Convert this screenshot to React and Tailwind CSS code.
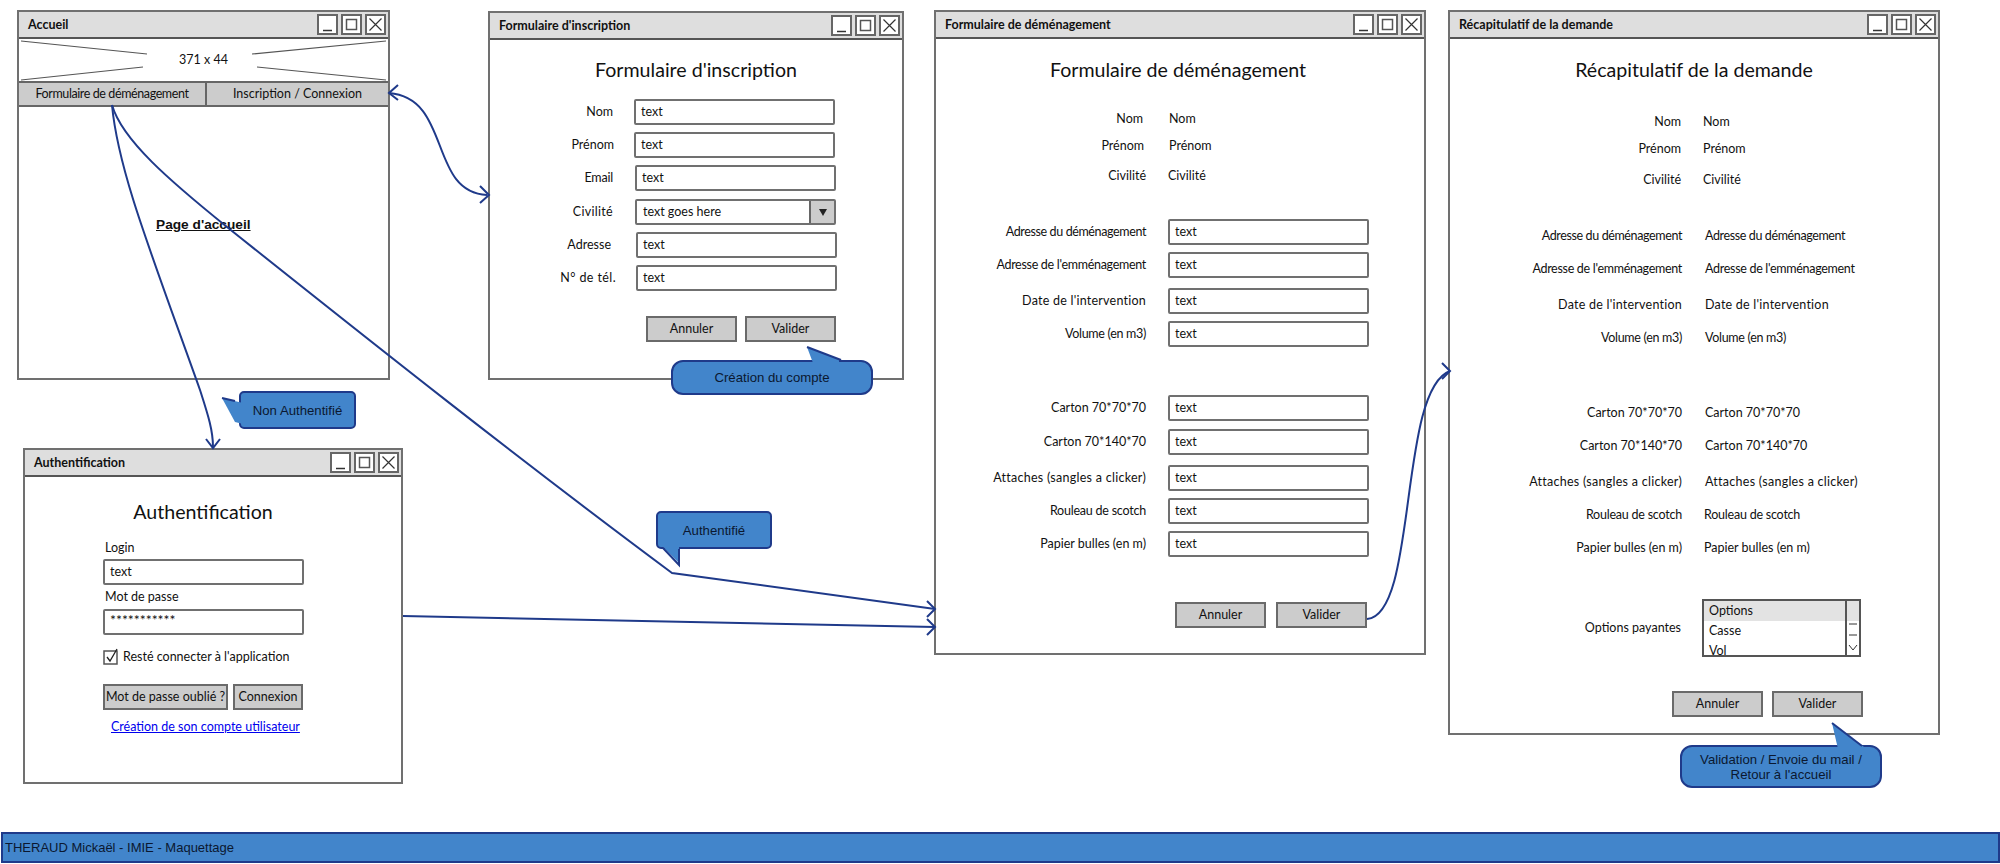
const sketch = { fontFamily: '"Lato", "Open Sans", sans-serif' };

function WinIcon({ type }) {
  return (
    <div className="w-[21px] h-[21px] bg-white border-2 border-[#666] flex items-center justify-center">
      <svg width="17" height="17" viewBox="0 0 17 17" fill="none" stroke="#333" strokeWidth="1.2">
        {type === 'min' && <path d="M4 14.5h9" strokeWidth="1.5" />}
        {type === 'max' && <rect x="3.5" y="3.5" width="10" height="10" strokeWidth="1.5" stroke="#555" />}
        {type === 'close' && <path d="M2.5 2.5l12 12M14.5 2.5l-12 12" />}
      </svg>
    </div>
  );
}

function Window({ title, className, children }) {
  return (
    <div className={`absolute bg-white border-2 border-[#707070] flex flex-col ${className}`}>
      <div className="flex items-center justify-between h-[27px] shrink-0 bg-[#dedede] border-b-2 border-[#555] pl-[9px] pr-[2px]">
        <span className="pt-[1px] text-[12.5px] font-bold text-[#111]">{title}</span>
        <div className="flex gap-[3px]">
          <WinIcon type="min" />
          <WinIcon type="max" />
          <WinIcon type="close" />
        </div>
      </div>
      {children}
    </div>
  );
}

function Heading({ children, className = '' }) {
  return <div className={`h-[28px] flex items-center justify-center text-[19.6px] leading-none text-[#111] ${className}`}>{children}</div>;
}

function Field({ children = 'text', className = 'w-[201px]' }) {
  return (
    <div className={`h-[26px] shrink-0 bg-white border-2 border-[#707070] rounded-[2px] flex items-center pl-[5px] text-[12.5px] text-[#111] ${className}`}>
      {children}
    </div>
  );
}

function Btn({ children, className = 'w-[91px]' }) {
  return (
    <div className={`h-[26px] shrink-0 bg-[#cccccc] border-2 border-[#6a6a6a] flex items-center justify-center text-[12.5px] text-[#111] ${className}`}>
      {children}
    </div>
  );
}

function FormRow({ label, lw, fs = '', className = '', children }) {
  return (
    <div className={`flex items-center ${className}`}>
      <div className={`text-right text-[12.5px] text-[#111] whitespace-nowrap shrink-0 ${fs} ${lw}`}>{label}</div>
      {children}
    </div>
  );
}

function Bubble({ className, tail, tailClass, children }) {
  return (
    <div className={`absolute z-20 bg-[#4285cb] border-2 border-[#1f3a8a] flex items-center justify-center text-center text-[13.2px] leading-[15px] text-[#0b1830] ${className}`} style={{ fontFamily: '"Liberation Sans", sans-serif' }}>
      <svg className={`absolute overflow-visible ${tailClass}`} width="40" height="30">
        <polygon points={tail.fill} fill="#4285cb" />
        <polyline points={tail.line} fill="none" stroke="#1f3a8a" strokeWidth="2" />
      </svg>
      <span className="relative">{children}</span>
    </div>
  );
}

function Arrows() {
  return (
    <svg className="absolute left-0 top-0 z-10 pointer-events-none" width="2000" height="864" fill="none" stroke="#1f3a8a" strokeWidth="2">
      <path d="M389 93C452 98 428 192 487 195" />
      <path d="M398 85L389 93L398 100M480 186L489 195L480 203" />
      <path d="M112 105C118 170 150 250 200 390C208 415 213 430 213 447" />
      <path d="M206 439L213 448L220 439" />
      <path d="M112 105C122 140 170 181 227 227C375 345 520 460 672 573L935 609" />
      <path d="M927 601L935 609L927 617" />
      <path d="M403 616L935 627" />
      <path d="M927 619L935 627L927 635" />
      <path d="M1367 619C1418 615 1398 390 1450 371" />
      <path d="M1442 363L1450 371L1442 379" />
    </svg>
  );
}

function Accueil() {
  return (
    <Window title="Accueil" className="left-[17px] top-[10px] w-[373px] h-[370px]">
      <div className="relative h-[42px] shrink-0 flex items-center justify-center text-[12.5px] text-[#111]">
        <svg className="absolute left-0 top-0" width="369" height="42" fill="none" stroke="#555" strokeWidth="1.2">
          <path d="M2 2L128 15M367 2L233 15M2 41L124 28M367 41L238 28" />
        </svg>
        371 x 44
      </div>
      <div className="flex h-[26px] shrink-0 bg-[#cccccc] border-y-2 border-[#666] text-[12.5px] text-[#111]">
        <div className="w-[188px] flex items-center justify-center border-r-2 border-[#666] tracking-[-0.4px]">Formulaire de déménagement</div>
        <div className="flex-1 flex items-center justify-center">Inscription / Connexion</div>
      </div>
      <div className="mt-[108px] ml-[137px] text-[13.7px] font-bold underline text-[#111]" style={{ fontFamily: '"Liberation Sans", sans-serif' }}>
        Page d&apos;accueil
      </div>
    </Window>
  );
}

function Inscription() {
  return (
    <Window title="Formulaire d'inscription" className="left-[488px] top-[11px] w-[416px] h-[369px]">
      <Heading className="mt-[16px]">Formulaire d&apos;inscription</Heading>
      <div className="flex flex-col gap-[7px] mt-[15px]">
        <FormRow label="Nom" lw="w-[123px]"><Field className="w-[201px] ml-[21px]" /></FormRow>
        <FormRow label="Prénom" lw="w-[124px]"><Field className="w-[201px] ml-[20px]" /></FormRow>
        <FormRow label="Email" lw="w-[123px]" fs="tracking-[-0.2px]"><Field className="w-[201px] ml-[22px]" /></FormRow>
        <FormRow label="Civilité" lw="w-[123px]" fs="tracking-[0.3px]" className="mt-[1px]">
          <div className="ml-[22px] w-[201px] h-[26px] flex border-2 border-[#707070] rounded-[2px] text-[12.5px] text-[#111]">
            <div className="flex-1 flex items-center pl-[6px]">text goes here</div>
            <div className="w-[25px] bg-[#cccccc] border-l-2 border-[#666] flex items-center justify-center">
              <svg width="10" height="9" viewBox="0 0 10 9"><path d="M1 1h8L5 8z" fill="#222" /></svg>
            </div>
          </div>
        </FormRow>
        <FormRow label="Adresse" lw="w-[121px]"><Field className="w-[201px] ml-[25px]" /></FormRow>
        <FormRow label="N° de tél." lw="w-[126px]" fs="tracking-[0.4px]"><Field className="w-[201px] ml-[20px]" /></FormRow>
      </div>
      <div className="flex gap-[8px] ml-[156px] mt-[25px]">
        <Btn>Annuler</Btn>
        <Btn>Valider</Btn>
      </div>
    </Window>
  );
}

function Auth() {
  return (
    <Window title="Authentification" className="left-[23px] top-[448px] w-[380px] h-[336px]">
      <div className="ml-[78px] w-[200px] flex flex-col text-[12.5px] text-[#111]">
        <Heading className="mt-[21px]">Authentification</Heading>
        <div className="mt-[14px] ml-[2px] h-[16px] leading-[16px]">Login</div>
        <Field className="w-[201px] mt-[3px]" />
        <div className="mt-[4px] ml-[2px] h-[16px] leading-[16px]">Mot de passe</div>
        <Field className="w-[201px] mt-[4px] items-start leading-[18px] text-[14px]">***********</Field>
        <div className="flex items-center mt-[14px] h-[16px]">
          <svg width="16" height="18" viewBox="0 0 16 18" fill="none" className="shrink-0">
            <rect x="1" y="3" width="13" height="13" stroke="#555" strokeWidth="1.5" />
            <path d="M4 9l3 4L14 1" stroke="#222" strokeWidth="1.3" />
          </svg>
          <span className="ml-[4px] whitespace-nowrap">Resté connecter à l&apos;application</span>
        </div>
        <div className="flex gap-[5px] mt-[19px]">
          <Btn className="w-[125px]">Mot de passe oublié ?</Btn>
          <Btn className="w-[70px]">Connexion</Btn>
        </div>
        <a className="mt-[9px] ml-[8px] underline text-[#0000ee] whitespace-nowrap leading-[16px]">Création de son compte utilisateur</a>
      </div>
    </Window>
  );
}

const demenagementRows = [
  { label: 'Adresse du déménagement', mt: 'mt-[33px]', fs: 'tracking-[-0.38px]' },
  { label: "Adresse de l'emménagement", mt: 'mt-[7px]', fs: 'tracking-[-0.3px]' },
  { label: "Date de l'intervention", mt: 'mt-[10px]', fs: 'tracking-[0.23px]' },
  { label: 'Volume (en m3)', mt: 'mt-[7px]', fs: 'tracking-[-0.3px]' },
  { label: 'Carton 70*70*70', mt: 'mt-[48px]' },
  { label: 'Carton 70*140*70', mt: 'mt-[8px]' },
  { label: 'Attaches (sangles a clicker)', mt: 'mt-[10px]', fs: 'tracking-[0.27px]' },
  { label: 'Rouleau de scotch', mt: 'mt-[7px]', fs: 'tracking-[-0.22px]' },
  { label: 'Papier bulles (en m)', mt: 'mt-[7px]' },
];

function Demenagement() {
  return (
    <Window title="Formulaire de déménagement" className="left-[934px] top-[10px] w-[492px] h-[645px]">
      <Heading className="mt-[17px] mr-[4px]">Formulaire de déménagement</Heading>
      <FormRow label="Nom" lw="w-[207px]" className="mt-[25px] h-[20px]"><span className="ml-[26px] text-[12.5px] text-[#111]">Nom</span></FormRow>
      <FormRow label="Prénom" lw="w-[208px]" className="mt-[7px] h-[20px]"><span className="ml-[25px] text-[12.5px] text-[#111]">Prénom</span></FormRow>
      <FormRow label="Civilité" lw="w-[210px]" className="mt-[10px] h-[20px]"><span className="ml-[22px] text-[12.5px] text-[#111]">Civilité</span></FormRow>
      {demenagementRows.map((r) => (
        <FormRow key={r.label} label={r.label} lw="w-[210px]" fs={r.fs} className={r.mt}>
          <Field className="w-[201px] ml-[22px]" />
        </FormRow>
      ))}
      <div className="flex gap-[10px] ml-[239px] mt-[45px]">
        <Btn>Annuler</Btn>
        <Btn>Valider</Btn>
      </div>
    </Window>
  );
}

const recapRows = [
  { label: 'Nom', mt: 'mt-[28px]', lw: 'w-[231px]', ml: 'ml-[22px]' },
  { label: 'Prénom', mt: 'mt-[7px]', lw: 'w-[231px]', ml: 'ml-[22px]' },
  { label: 'Civilité', mt: 'mt-[11px]', lw: 'w-[231px]', ml: 'ml-[22px]' },
  { label: 'Adresse du déménagement', mt: 'mt-[36px]', lw: 'w-[232px]', ml: 'ml-[23px]', fs: 'tracking-[-0.38px]' },
  { label: "Adresse de l'emménagement", mt: 'mt-[13px]', lw: 'w-[232px]', ml: 'ml-[23px]', fs: 'tracking-[-0.3px]' },
  { label: "Date de l'intervention", mt: 'mt-[16px]', lw: 'w-[232px]', ml: 'ml-[23px]', fs: 'tracking-[0.23px]' },
  { label: 'Volume (en m3)', mt: 'mt-[13px]', lw: 'w-[232px]', ml: 'ml-[23px]', fs: 'tracking-[-0.3px]' },
  { label: 'Carton 70*70*70', mt: 'mt-[55px]', lw: 'w-[232px]', ml: 'ml-[23px]' },
  { label: 'Carton 70*140*70', mt: 'mt-[13px]', lw: 'w-[232px]', ml: 'ml-[23px]' },
  { label: 'Attaches (sangles a clicker)', mt: 'mt-[16px]', lw: 'w-[232px]', ml: 'ml-[23px]', fs: 'tracking-[0.27px]' },
  { label: 'Rouleau de scotch', mt: 'mt-[13px]', lw: 'w-[232px]', ml: 'ml-[22px]', fs: 'tracking-[-0.22px]' },
  { label: 'Papier bulles (en m)', mt: 'mt-[13px]', lw: 'w-[232px]', ml: 'ml-[22px]' },
];

function Recap() {
  return (
    <Window title="Récapitulatif de la demande" className="left-[1448px] top-[10px] w-[492px] h-[725px]">
      <Heading className="mt-[17px]">Récapitulatif de la demande</Heading>
      {recapRows.map((r) => (
        <FormRow key={r.label} label={r.label} lw={r.lw} fs={r.fs} className={`h-[20px] ${r.mt}`}>
          <span className={`text-[12.5px] text-[#111] whitespace-nowrap ${r.fs || ''} ${r.ml}`}>{r.label}</span>
        </FormRow>
      ))}
      <FormRow label="Options payantes" lw="w-[231px]" className="mt-[41px]">
        <div className="ml-[21px] w-[159px] h-[58px] border-2 border-[#555] relative overflow-hidden text-[12.5px] text-[#111]">
          <div className="h-[20px] bg-[#e3e3e3] pl-[5px] flex items-center">Options</div>
          <div className="h-[20px] pl-[5px] flex items-center">Casse</div>
          <div className="h-[20px] pl-[5px] flex items-center">Vol</div>
          <div className="absolute right-0 top-0 bottom-0 w-[14px] border-l-2 border-[#555] bg-white">
            <div className="h-[20px] bg-[#e3e3e3]" />
            <svg width="12" height="34" viewBox="0 0 12 34" fill="none" stroke="#333">
              <path d="M2 3h8M2 14h8M2 24l4 5 4-5" />
            </svg>
          </div>
        </div>
      </FormRow>
      <div className="flex gap-[9px] ml-[222px] mt-[34px]">
        <Btn>Annuler</Btn>
        <Btn>Valider</Btn>
      </div>
    </Window>
  );
}

export default function App() {
  return (
    <div className="relative w-[2000px] h-[864px] overflow-hidden bg-white" style={sketch}>
      <Accueil />
      <Inscription />
      <Auth />
      <Demenagement />
      <Recap />
      <Arrows />

      <Bubble
        className="left-[239px] top-[391px] w-[117px] h-[38px] rounded-[5px]"
        tailClass="left-[-18px] top-[5px]"
        tail={{ fill: '-1,0 20,5 20,26 12,24', line: '-1,0 12,3 M-1,0 12,24' }}
      >
        Non Authentifié
      </Bubble>
      <Bubble
        className="left-[656px] top-[511px] w-[116px] h-[38px] rounded-[5px]"
        tailClass="left-[3px] top-[34px]"
        tail={{ fill: '2,0 18,0 18,0 18,16', line: '2,1 18,18 18,2' }}
      >
        Authentifié
      </Bubble>
      <Bubble
        className="left-[671px] top-[360px] w-[202px] h-[35px] rounded-[12px]"
        tailClass="left-[134px] top-[-15px]"
        tail={{ fill: '0,0 32,12 32,16 6,16', line: '0,0 34,13 M0,0 6,14' }}
      >
        Création du compte
      </Bubble>
      <Bubble
        className="left-[1680px] top-[745px] w-[202px] h-[43px] rounded-[12px]"
        tailClass="left-[150px] top-[-24px]"
        tail={{ fill: '0,0 32,24 32,26 6,26', line: '0,0 30,23 M0,0 5,23' }}
      >
        Validation / Envoie du mail /<br />Retour à l&apos;accueil
      </Bubble>

      <div className="absolute left-[1px] top-[832px] right-0 h-[31px] bg-[#4285cb] border-2 border-[#1f3a8a] flex items-center pl-[2px] text-[13px] text-[#0b1830]" style={{ fontFamily: '"Liberation Sans", sans-serif' }}>
        THERAUD Mickaël - IMIE - Maquettage
      </div>
    </div>
  );
}
